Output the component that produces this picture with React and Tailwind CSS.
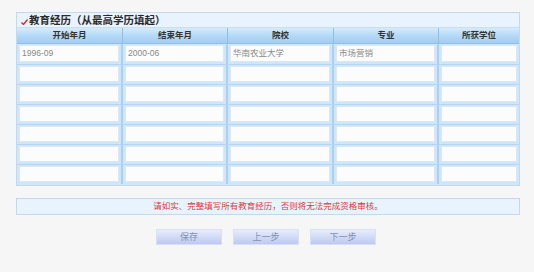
import React from 'react';

const columns = [
  { label: '开始年月', width: 'w-[106px]' },
  { label: '结束年月', width: 'w-[105px]' },
  { label: '院校', width: 'w-[106px]' },
  { label: '专业', width: 'w-[105px]' },
  { label: '所获学位', width: 'flex-1' },
];

const rows = [
  ['1996-09', '2000-06', '华南农业大学', '市场营销', ''],
  ['', '', '', '', ''],
  ['', '', '', '', ''],
  ['', '', '', '', ''],
  ['', '', '', '', ''],
  ['', '', '', '', ''],
  ['', '', '', '', ''],
];

const App = () => {
  return (
    <div
      className="w-[534px] h-[272px] bg-[#f6f6f6] pl-4 pt-3 overflow-hidden"
      style={{ fontFamily: '"Liberation Sans", "Noto Sans CJK SC", sans-serif' }}
    >
      <div className="w-[504px]">
        {/* Education panel */}
        <div className="border border-[#c2d9ee] bg-[#cfe5fa]">
          <div className="h-[15px] bg-[#e8f3fd] border-b border-[#c9def0] flex items-center pl-[4px]">
            <svg width="7" height="6" viewBox="0 0 7 6" className="mr-[1px] mt-[3px]">
              <path d="M0.5 3.5 L2.5 5.5 L6.5 0.5" fill="none" stroke="#d9262c" strokeWidth="1.3" />
            </svg>
            <span className="text-[10.5px] font-bold text-[#2a2a2a] leading-none">教育经历（从最高学历填起）</span>
          </div>

          {/* Header row */}
          <div className="flex h-[16px] bg-gradient-to-b from-[#d6ebfc] via-[#b5d9f7] to-[#a3cdf2] border-b border-[#8fbfe9]">
            {columns.map((col, i) => (
              <div
                key={col.label}
                className={`${col.width} flex items-center justify-center text-[8.5px] font-bold text-[#333] ${i < 4 ? 'border-r border-[#8fbfe9]' : ''}`}
              >
                {col.label}
              </div>
            ))}
          </div>

          {/* Input rows */}
          {rows.map((row, r) => (
            <div key={r} className={`flex h-[20px] ${r > 0 ? 'border-t border-[#b3d6f5]' : ''}`}>
              {row.map((val, i) => (
                <div
                  key={i}
                  className={`${columns[i].width} px-[2px] pt-[1px] pb-[2px] ${i < 4 ? 'border-r-2 border-[#a9d1f4]' : ''}`}
                >
                  <div className="h-full bg-[#fcfcfc] border border-[#dbe7f2] flex items-center px-[2px] text-[8.5px] text-[#8a8a8a] leading-none">
                    {val}
                  </div>
                </div>
              ))}
            </div>
          ))}
          <div className="h-[1px]" />
        </div>

        {/* Notice */}
        <div className="mt-[12px] h-[17px] border border-[#c2d9ee] bg-[#e8f3fd] flex items-center justify-center text-[8.5px] text-[#e0393e] leading-none">
          请如实、完整填写所有教育经历，否则将无法完成资格审核。
        </div>

        {/* Buttons */}
        <div className="mt-[14px] flex justify-center gap-[11px] pr-[4px]">
          {['保存', '上一步', '下一步'].map((t) => (
            <button
              key={t}
              className="w-[66px] h-[16px] bg-gradient-to-b from-[#e8ecfb] to-[#bccaf1] border border-[#d9e0f5] text-[9px] text-[#8390b4] leading-none flex items-center justify-center"
            >
              {t}
            </button>
          ))}
        </div>
      </div>
    </div>
  );
};

export default App;
